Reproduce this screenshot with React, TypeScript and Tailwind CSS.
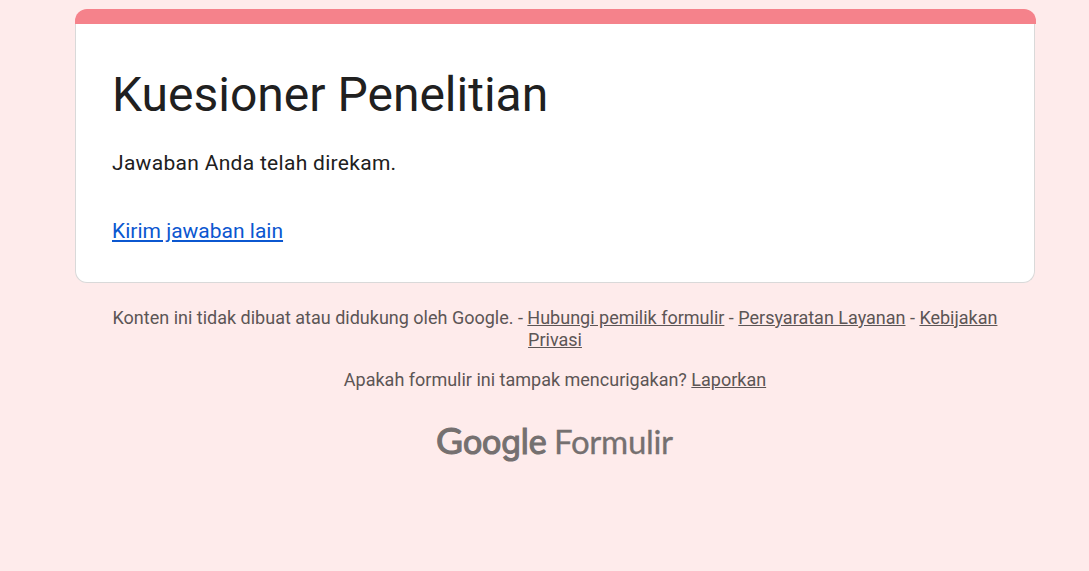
const linkClass = "underline";

const App = () => {
  return (
    <main className="min-h-screen overflow-hidden bg-[#feebeb] font-['Roboto',sans-serif]">
      <div className="ml-[75px] w-[960px] pt-[9px]">
        {/* Form card */}
        <section className="h-[274px]">
          <div className="h-[15px] w-[961px] rounded-t-xl bg-[#f5828b]" />
          <div className="h-[259px] rounded-b-xl border border-t-0 border-[#d9d9d9] bg-white px-9">
            <h1 className="pt-[41px] text-[48px] leading-[60px] text-[#202020]">Kuesioner Penelitian</h1>
            <p className="mt-[23px] text-[21px] leading-[30px] tracking-[0.3px] text-[#202020]">
              Jawaban Anda telah direkam.
            </p>
            <a href="#" className="mt-[38px] inline-block text-[21px] leading-[30px] text-[#0b57d0] underline">
              Kirim jawaban lain
            </a>
          </div>
        </section>

        {/* Footer */}
        <footer className="pt-[24px] text-center text-[18px] leading-[22px] text-[#5c5555]">
          <p className="px-9">
            Konten ini tidak dibuat atau didukung oleh Google. - <a href="#" className={linkClass}>Hubungi pemilik formulir</a>{" "}
            - <a href="#" className={linkClass}>Persyaratan Layanan</a> - <a href="#" className={linkClass}>Kebijakan Privasi</a>
          </p>
          <p className="mt-[18px]">
            Apakah formulir ini tampak mencurigakan? <a href="#" className={linkClass}>Laporkan</a>
          </p>

          {/* Wordmark */}
          <a href="#" className="mt-[28px] ml-[361px] flex items-baseline font-['Lato',sans-serif] leading-[42px] text-[#757070]">
            <span className="w-[118px] text-left text-[34px] tracking-[-0.1px] [-webkit-text-stroke:1.1px_#757070]">
              <span className="text-[37px]">G</span>oo
              <span className="font-['Inter',sans-serif] text-[32px]">g</span>le
            </span>
            <span className="text-[33px] tracking-[-0.3px] [-webkit-text-stroke:0.3px_#757070]">Formulir</span>
          </a>
        </footer>
      </div>
    </main>
  );
};

export default App;
